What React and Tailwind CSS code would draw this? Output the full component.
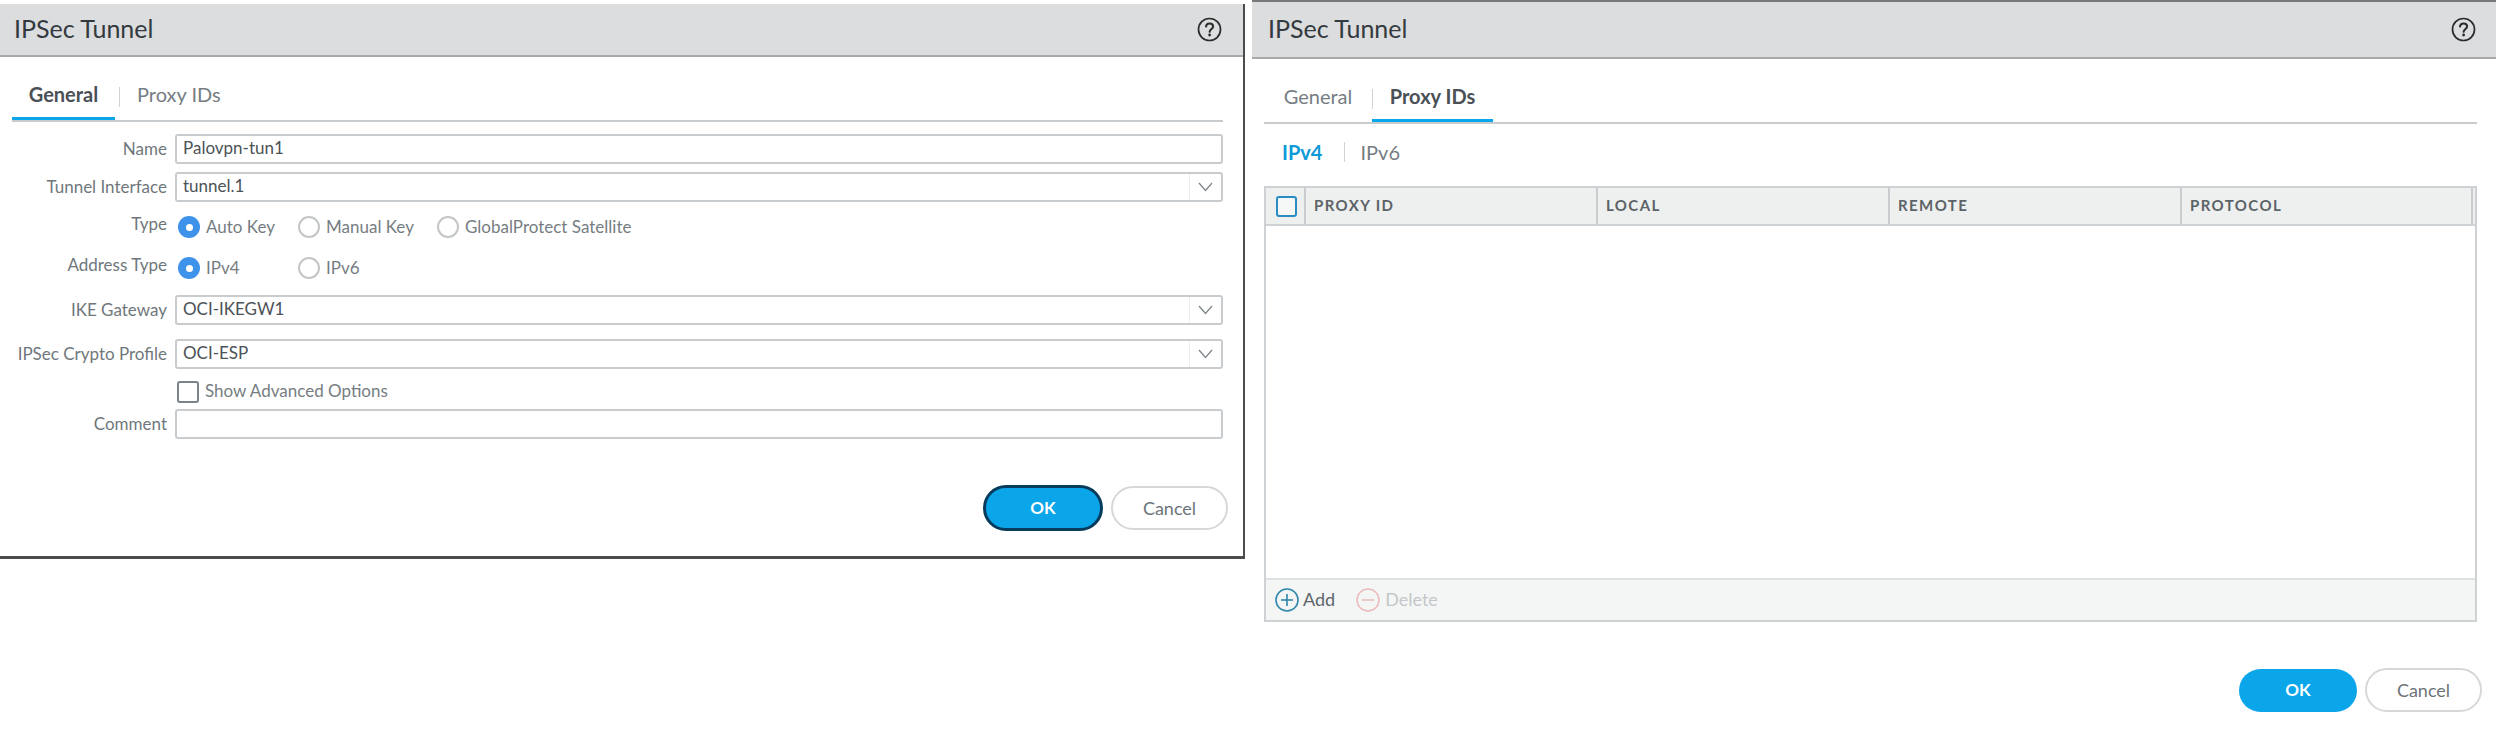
import React from "react";

const font = "font-['Lato','Liberation_Sans',sans-serif]";

function HelpIcon() {
  return (
    <svg width="25" height="25" viewBox="0 0 25 25" fill="none" className="shrink-0">
      <circle cx="12.5" cy="12.5" r="11" stroke="#2b2b2b" strokeWidth="1.7" />
      <path d="M9 9.6c.2-2 1.7-3.1 3.6-3.1 2 0 3.5 1.2 3.5 2.9 0 2.4-3.2 2.7-3.5 5.4" stroke="#2b2b2b" strokeWidth="2" strokeLinecap="round" />
      <circle cx="12.6" cy="18" r="1.4" fill="#2b2b2b" />
    </svg>
  );
}

function Header({ className }) {
  return (
    <div className={`flex items-center justify-between bg-[#dcddde] border-b-2 border-[#a8aaac] text-[25px] text-[#333a3f] ${className}`}>
      <span className="pb-[2px]">IPSec Tunnel</span>
      <HelpIcon />
    </div>
  );
}

function Label({ children, raised }) {
  return (
    <div className={`w-[155px] shrink-0 text-right text-[#6f777c] text-[17px] leading-none pb-[2px] ${raised ? "-translate-y-[3px]" : ""}`}>
      {children}
    </div>
  );
}

function TextField({ value }) {
  return (
    <div className="flex-1 h-[30px] flex items-center px-[6px] pb-[2px] border-2 border-[#c9ccce] rounded-[3px] text-[17px] text-[#4c5256] bg-white">
      {value}
    </div>
  );
}

function SelectField({ value }) {
  return (
    <div className="flex-1 h-[30px] flex items-stretch border-2 border-[#c9ccce] rounded-[3px] text-[17px] text-[#4c5256] bg-white">
      <div className="flex-1 flex items-center px-[6px] pb-[2px]">{value}</div>
      <div className="w-[32px] flex items-center justify-center border-l border-[#eceeef]">
        <svg width="15" height="10" viewBox="0 0 15 10" fill="none">
          <path d="M1 1l6.5 7.5L14 1" stroke="#7f868a" strokeWidth="1.3" />
        </svg>
      </div>
    </div>
  );
}

function Radio({ checked, label, w }) {
  return (
    <div className={`flex items-center gap-[6px] ${w}`}>
      {checked ? (
        <span className="w-[22px] h-[22px] rounded-full bg-[#3f92ea] flex items-center justify-center shrink-0">
          <span className="w-[7px] h-[7px] rounded-full bg-white" />
        </span>
      ) : (
        <span className="w-[22px] h-[22px] rounded-full border-2 border-[#c3c6c8] bg-white shrink-0" />
      )}
      <span className="text-[17px] leading-none text-[#767d82] pb-[2px]">{label}</span>
    </div>
  );
}

function Row({ label, raised, className, children }) {
  return (
    <div className={`flex items-center gap-[8px] ${className}`}>
      <Label raised={raised}>{label}</Label>
      {children}
    </div>
  );
}

function Buttons({ focused, className }) {
  return (
    <div className={`flex items-center justify-end gap-[8px] ${className}`}>
      <div
        className={`rounded-full bg-[#0ba5ea] text-white font-bold text-[17px] flex items-center justify-center ${
          focused ? "h-[46px] w-[120px] border-[3px] border-[#073b5c]" : "h-[43px] w-[118px]"
        }`}
      >
        OK
      </div>
      <div className="w-[117px] h-[44px] rounded-full border-2 border-[#d5d7d9] bg-white text-[#6c7479] text-[18px] flex items-center justify-center">
        Cancel
      </div>
    </div>
  );
}

function TableHead({ w, children }) {
  return (
    <div className={`${w} h-full flex items-center pl-[8px] pb-[2px] border-r-2 border-[#c9ccce] text-[15px] font-bold tracking-[1.4px] text-[#5c6368]`}>
      {children}
    </div>
  );
}

function CircleBtn({ color, plus }) {
  return (
    <svg width="24" height="24" viewBox="0 0 24 24" fill="none" className="shrink-0">
      <circle cx="12" cy="12" r="11" stroke={color} strokeWidth="1.6" />
      <path d="M6 12h12" stroke={color} strokeWidth="1.6" />
      {plus && <path d="M12 6v12" stroke={color} strokeWidth="1.6" />}
    </svg>
  );
}

export default function App() {
  return (
    <div className={`w-[2496px] h-[736px] bg-white flex items-start overflow-hidden ${font}`}>
      {/* Left dialog */}
      <div className="mt-[4px] w-[1245px] h-[555px] shrink-0 flex flex-col bg-white border-r-2 border-b-[3px] border-[#4a4c4e]">
        <Header className="h-[53px] shrink-0 pl-[14px] pr-[21px]" />
        <div className="pl-[12px] pr-[20px] flex flex-col">
          <div className="h-[65px] flex items-end border-b-2 border-[#c9ccce]">
            <div className="w-[103px] h-[50px] flex items-center justify-center border-b-[3px] border-[#0ba5ea] text-[20px] font-bold text-[#4a5055]">
              General
            </div>
            <div className="ml-[4px] w-px h-[20px] mb-[13px] bg-[#d0d3d5]" />
            <div className="ml-[17px] h-[50px] flex items-center pb-[3px] text-[20px] text-[#767d82]">Proxy IDs</div>
          </div>
          <div className="flex flex-col -mt-px">
            <Row label="Name" className="mt-[13px]"><TextField value="Palovpn-tun1" /></Row>
            <Row label="Tunnel Interface" className="mt-[8px]"><SelectField value="tunnel.1" /></Row>
            <Row label="Type" raised className="mt-[14px]">
              <div className="flex items-center pl-[3px]">
                <Radio checked label="Auto Key" w="w-[120px]" />
                <Radio label="Manual Key" w="w-[139px]" />
                <Radio label="GlobalProtect Satellite" />
              </div>
            </Row>
            <Row label="Address Type" raised className="mt-[19px]">
              <div className="flex items-center pl-[3px]">
                <Radio checked label="IPv4" w="w-[120px]" />
                <Radio label="IPv6" />
              </div>
            </Row>
            <Row label="IKE Gateway" className="mt-[16px]"><SelectField value="OCI-IKEGW1" /></Row>
            <Row label="IPSec Crypto Profile" className="mt-[14px]"><SelectField value="OCI-ESP" /></Row>
            <div className="mt-[12px] ml-[165px] flex items-center gap-[6px]">
              <span className="w-[22px] h-[22px] rounded-[3px] border-2 border-[#7d8286] bg-white" />
              <span className="text-[17px] leading-none text-[#767d82] pb-[3px]">Show Advanced Options</span>
            </div>
            <Row label="Comment" className="mt-[6px]">
              <div className="flex-1 h-[30px] border-2 border-[#c9ccce] rounded-[3px] bg-white" />
            </Row>
          </div>
          <Buttons focused className="mt-[46px] -mr-[5px]" />
        </div>
      </div>

      {/* Right dialog */}
      <div className="ml-[7px] flex-1 h-[736px] flex flex-col border-t-2 border-[#77797b]">
        <Header className="h-[57px] shrink-0 pl-[16px] pr-[20px]" />
        <div className="pl-[12px] pr-[19px] flex flex-col">
          <div className="h-[65px] flex items-end border-b-2 border-[#c9ccce]">
            <div className="w-[108px] h-[50px] pb-[3px] flex items-center justify-center text-[20px] text-[#767d82]">General</div>
            <div className="relative w-[121px] h-[50px] flex items-center justify-center border-b-[3px] border-[#0ba5ea] text-[20px] font-bold text-[#4a5055]">
              <span className="absolute left-0 top-[17px] w-px h-[20px] bg-[#d0d3d5]" />
              Proxy IDs
            </div>
          </div>
          <div className="mt-[18px] h-[20px] flex items-center text-[20px]">
            <span className="ml-[18px] font-bold text-[#0c9ad8]">IPv4</span>
            <span className="ml-[22px] w-px h-[20px] bg-[#d0d3d5]" />
            <span className="ml-[15px] text-[#767d82]">IPv6</span>
          </div>
          <div className="mt-[24px] h-[436px] flex flex-col border-2 border-[#cfd2d4] bg-white">
            <div className="h-[38px] shrink-0 flex items-center bg-[#eef0ef] border-b-2 border-[#cfd2d4]">
              <div className="w-[40px] h-full flex items-center pl-[10px] border-r-2 border-[#c9ccce]">
                <span className="w-[21px] h-[21px] rounded-[3px] border-2 border-[#2a8dc2] bg-[#f6f8f8]" />
              </div>
              <TableHead w="w-[292px]">PROXY ID</TableHead>
              <TableHead w="w-[292px]">LOCAL</TableHead>
              <TableHead w="w-[292px]">REMOTE</TableHead>
              <TableHead w="w-[291px]">PROTOCOL</TableHead>
            </div>
            <div className="flex-1" />
            <div className="h-[42px] shrink-0 flex items-center pl-[9px] bg-[#f4f6f6] border-t-2 border-[#dfe1e2] text-[18px]">
              <CircleBtn color="#2f87ab" plus />
              <span className="ml-[4px] pb-[2px] text-[#5f666a]">Add</span>
              <span className="ml-[21px] flex items-center">
                <CircleBtn color="#e9bcbc" />
                <span className="ml-[5px] pb-[2px] text-[#c4c7c8]">Delete</span>
              </span>
            </div>
          </div>
          <Buttons className="mt-[46px] -mr-[5px]" />
        </div>
      </div>
    </div>
  );
}
